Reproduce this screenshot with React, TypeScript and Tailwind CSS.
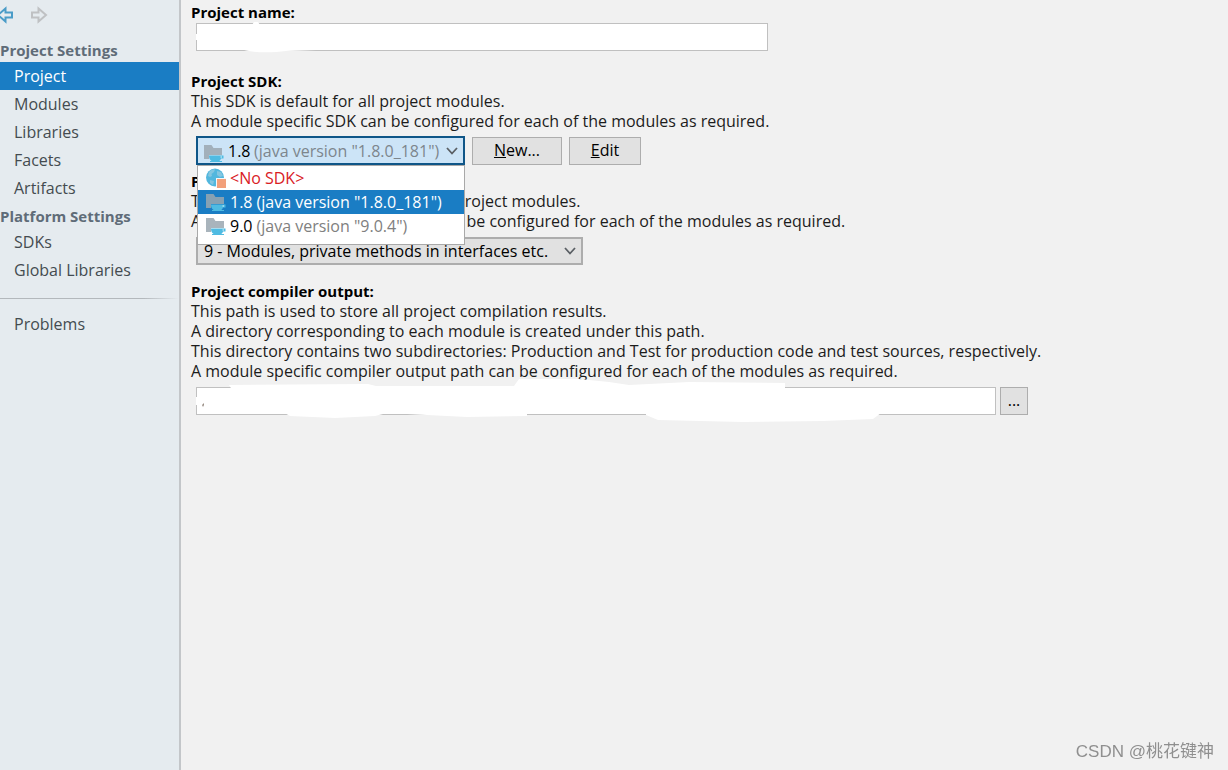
import { useState } from "react";
import clsx from "clsx";

const projectSettings = ["Project", "Modules", "Libraries", "Facets", "Artifacts"];
const platformSettings = ["SDKs", "Global Libraries"];

const sdks = [
  { id: "none", name: "<No SDK>", version: "" },
  { id: "1.8", name: "1.8", version: '(java version "1.8.0_181")' },
  { id: "9.0", name: "9.0", version: '(java version "9.0.4")' },
];

const ArrowIcon = ({ className }: { className: string }) => (
  <svg viewBox="0 0 18 18" className={className} fill="none" stroke="currentColor" strokeWidth="2">
    <path d="M2 6.500h6.500V2.500L16 9l-7.500 6.500v-4H2z" />
  </svg>
);

const JdkIcon = () => (
  <svg viewBox="0 0 20 18" className="h-[18px] w-5 shrink-0">
    <path d="M0 1h7.500l2 3H18v7H5v4H0z" fill="#9aa7b0" fillOpacity="0.85" />
    <path d="M5 11.500h14.500v3H17c-.5 2-2 3-3.500 3h-4C7 17.500 5 15 5 11.500z" fill="#4fbbe2" />
    <path d="M16.500 12.500h1.500v1h-1.500z" fill="#e4f3fa" />
    <path d="M6 17h12v1H6z" fill="#4fbbe2" />
  </svg>
);

const NoSdkIcon = () => (
  <svg viewBox="0 0 20 20" className="h-5 w-5 shrink-0">
    <circle cx="9" cy="9.500" r="9" fill="#52b7de" />
    <path d="M3 4c2-2 4-3 6-2.500L8 4 5.500 6 6 8l-2 1-2-1zM11 3l4 1 2 4-3 1-3-2zM4 12l4 1-1 4-3-2z" fill="#84c6e0" />
    <path d="M10 10h10v10H10z" fill="#f4f8fa" />
    <path d="M11 11h9v9h-9z" fill="#f2a07b" />
  </svg>
);

const Chevron = () => (
  <svg
    viewBox="0 0 12 8"
    className="pointer-events-none absolute top-1/2 right-[7px] h-2 w-3 -translate-y-1/2"
    fill="none"
    stroke="#5a5f64"
    strokeWidth="1.8"
  >
    <path d="M1 1l5 5.500L11 1" />
  </svg>
);

type NavProps = {
  items: string[];
  active: string;
  onSelect: (item: string) => void;
};

const NavList = ({ items, active, onSelect }: NavProps) => (
  <ul>
    {items.map((item) => (
      <li key={item}>
        <button
          onClick={() => onSelect(item)}
          className={clsx(
            "block h-7 w-full pl-3.5 text-left",
            item === active ? "bg-[#1a7dc4] text-white" : "text-[#444b50]"
          )}
        >
          {item}
        </button>
      </li>
    ))}
  </ul>
);

const labelStyle = "block text-[15px] leading-5 font-bold text-black";
const navTitleStyle = "h-[26px] pt-1 text-[15px] leading-5 font-bold text-[#5f6c78]";
const buttonStyle = "h-7 border border-[#adadad] bg-[#e1e1e1] pb-0.5 text-black";

const App = () => {
  const [section, setSection] = useState("Project");
  const [sdk, setSdk] = useState("1.8");
  const [open, setOpen] = useState(true);
  const current = sdks.find((s) => s.id === sdk);

  return (
    <div className="flex min-h-screen bg-[#f1f1f1] font-['Open_Sans','Noto_Sans_CJK_SC',sans-serif] text-[16px] leading-5 text-[#1c1c1c]">
      <nav className="w-[181px] shrink-0 border-r-2 border-[#c3c6c9] bg-[#e5ebef]">
        <div className="flex h-9 items-center gap-4 pb-1.5">
          <button aria-label="Back" className="-ml-1 text-[#4a9cc8]">
            <ArrowIcon className="h-[18px] w-[18px] rotate-180" />
          </button>
          <button aria-label="Forward" className="text-[#bfc1c3]">
            <ArrowIcon className="h-[18px] w-[18px]" />
          </button>
        </div>
        <h2 className={navTitleStyle}>Project Settings</h2>
        <NavList items={projectSettings} active={section} onSelect={setSection} />
        <h2 className={navTitleStyle}>Platform Settings</h2>
        <NavList items={platformSettings} active={section} onSelect={setSection} />
        <div className="mt-3.5 mb-[11px] h-px bg-linear-to-r from-[#b3b8bc] from-80% to-transparent" />
        <NavList items={["Problems"]} active={section} onSelect={setSection} />
      </nav>

      <main className="min-w-0 flex-1 pt-0.5 pr-4 pl-2.5">
        <section>
          <label htmlFor="project-name" className={labelStyle}>
            Project name:
          </label>
          <div className="relative mt-px ml-[5px] max-w-[572px]">
            <input
              id="project-name"
              className="block h-7 w-full border border-[#c0c0c0] bg-white px-1.5 outline-none"
            />
            <svg viewBox="0 0 140 32" className="pointer-events-none absolute -top-0.5 left-0 h-8 w-[140px]" fill="#fff">
              <path d="M0 13h4v6H0zM56 4l2-3h4l2 3v3h-8zM45 28c10 4 30 4 45 2l30-1v-3H45z" />
            </svg>
          </div>
        </section>

        <section className="mt-5">
          <label htmlFor="project-sdk" className={labelStyle}>
            Project SDK:
          </label>
          <p>This SDK is default for all project modules.</p>
          <p>A module specific SDK can be configured for each of the modules as required.</p>
          <div className="mt-[5px] ml-[5px] flex items-center gap-[7px]">
            <div className="relative w-[269px]">
              <select
                id="project-sdk"
                value={sdk}
                onMouseDown={(e) => {
                  e.preventDefault();
                  setOpen(!open);
                }}
                onChange={(e) => setSdk(e.target.value)}
                className="block h-[29px] w-full appearance-none border-2 border-[#0f5688] bg-[#cce4f7] pl-[30px] text-black outline-none"
              >
                {sdks.map((s) => (
                  <option key={s.id} value={s.id}>
                    {s.name}
                  </option>
                ))}
              </select>
              <span className="pointer-events-none absolute inset-y-0 left-2 flex items-center pt-1">
                {sdk === "none" ? <NoSdkIcon /> : <JdkIcon />}
              </span>
              <span className="pointer-events-none absolute inset-y-0 left-[58px] flex items-center text-[#7d868d]">
                {current?.version}
              </span>
              <Chevron />
              {open && (
                <ul
                  role="listbox"
                  aria-label="Project SDK"
                  className="absolute top-full left-px right-0 z-10 h-20 border border-[#a9a9a9] bg-white"
                >
                  {sdks.map((s) => (
                    <li
                      key={s.id}
                      role="option"
                      aria-selected={s.id === sdk}
                      onClick={() => {
                        setSdk(s.id);
                        setOpen(false);
                      }}
                      className={clsx(
                        "flex h-6 items-center gap-1 pl-2",
                        s.id === sdk ? "bg-[#1a7dc4] text-white" : "text-black"
                      )}
                    >
                      {s.id === "none" ? <NoSdkIcon /> : <JdkIcon />}
                      <span className={clsx(s.id === "none" && "text-[#d9201f]")}>{s.name}</span>
                      <span className={clsx(s.id !== sdk && "text-[#808080]")}>{s.version}</span>
                    </li>
                  ))}
                </ul>
              )}
            </div>
            <button className={clsx(buttonStyle, "w-[90px]")}>
              <u>N</u>ew...
            </button>
            <button className={clsx(buttonStyle, "w-[72px]")}>
              <u>E</u>dit
            </button>
          </div>
        </section>

        <section className="mt-1.5">
          <label htmlFor="language-level" className={labelStyle}>
            Project language level:
          </label>
          <p>This language level is default for all project modules.</p>
          <p>A module specific language level can be configured for each of the modules as required.</p>
          <div className="relative mt-1.5 ml-[5px] w-[387px]">
            <select
              id="language-level"
              className="block h-7 w-full appearance-none border-2 border-[#adadad] bg-[#e1e1e1] pl-1.5 text-black outline-none"
            >
              <option>9 - Modules, private methods in interfaces etc.</option>
            </select>
            <Chevron />
          </div>
        </section>

        <section className="mt-4">
          <label htmlFor="compiler-output" className={labelStyle}>
            Project compiler output:
          </label>
          <p>This path is used to store all project compilation results.</p>
          <p>A directory corresponding to each module is created under this path.</p>
          <p>
            This directory contains two subdirectories: Production and Test for production code and test sources,
            respectively.
          </p>
          <p>A module specific compiler output path can be configured for each of the modules as required.</p>
          <div className="mt-1.5 ml-[5px] flex max-w-[832px] gap-1">
            <div className="relative min-w-0 flex-1">
              <input
                id="compiler-output"
                className="block h-7 w-full border border-[#c0c0c0] bg-white px-1.5 outline-none"
              />
              <svg viewBox="0 0 720 48" className="pointer-events-none absolute -top-2.5 left-0 h-12 w-[720px]" fill="#fff">
                <path d="M0 20h3v8H0zM33 8l139-1 8 2 138 0 5-7 60 0 30 3 20 3 60-3 96 1v7l-4 3v5l-5 2 130 3v8l-25 2-8 6-50 2-80 1-85-2-12-5v-3H331v4l-60 1-80-4-12 3-40 2-45-2-7-4v-3l-40-2z" />
                <path d="M6 28l2-2v2l-1 2z" fill="#9a8f86" />
              </svg>
            </div>
            <button aria-label="Browse" className={clsx(buttonStyle, "w-7")}>
              ...
            </button>
          </div>
        </section>
      </main>

      <span className="pointer-events-none fixed right-3.5 bottom-1.5 font-['Liberation_Sans','Noto_Sans_CJK_SC',sans-serif] text-[17px] leading-6 text-[#8f8f8f]">
        CSDN @桃花键神
      </span>
    </div>
  );
};

export default App;
